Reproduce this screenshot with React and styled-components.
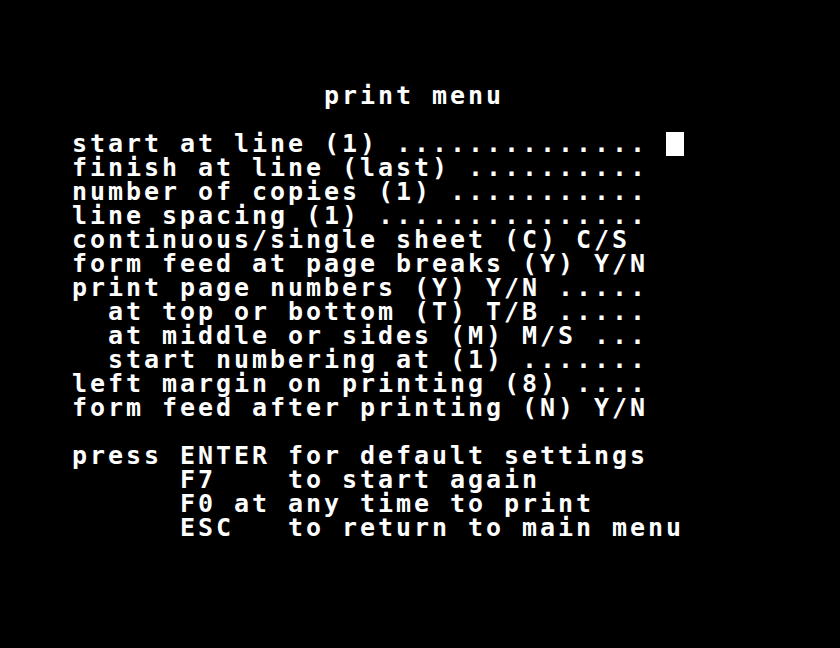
import React from "react";
import styled, { createGlobalStyle } from "styled-components";

const Global = createGlobalStyle`
  html, body {
    margin: 0;
    padding: 0;
    background: #000;
  }
  #root {
    min-height: 648px;
    background: #000;
  }
`;

const Screen = styled.div`
  width: 840px;
  height: 648px;
  box-sizing: border-box;
  padding: 84px 0 0 72px;
  background: #000;
  color: #fff;
  font-family: "DejaVu Sans Mono", "Liberation Mono", monospace;
  font-size: 25px;
  font-weight: ${(p) => (p.$bold ? 700 : 400)};
  letter-spacing: 2.95px;
  overflow: hidden;
`;

const Row = styled.div`
  height: 24px;
  line-height: 24px;
  white-space: pre;
  margin-bottom: ${(p) => (p.$gapAfter ? `${p.$gapAfter * 24}px` : "0")};
`;

const Cursor = styled.span`
  display: inline-block;
  width: 18px;
  height: 24px;
  background: #fff;
  vertical-align: top;
`;

const title = "              print menu";

const options = [
  "finish at line (last) ..........",
  "number of copies (1) ...........",
  "line spacing (1) ...............",
  "continuous/single sheet (C) C/S",
  "form feed at page breaks (Y) Y/N",
  "print page numbers (Y) Y/N .....",
  "  at top or bottom (T) T/B .....",
  "  at middle or sides (M) M/S ...",
  "  start numbering at (1) .......",
  "left margin on printing (8) ....",
  "form feed after printing (N) Y/N",
];

const help = [
  "press ENTER for default settings",
  "      F7    to start again",
  "      F0 at any time to print",
  "      ESC   to return to main menu",
];

export default function App() {
  return (
    <>
      <Global />
      <Screen $bold>
        <Row $gapAfter={1}>{title}</Row>
        <Row>
          {"start at line (1) .............. "}
          <Cursor />
        </Row>
        {options.map((l, i) => (
          <Row key={i} $gapAfter={i === options.length - 1 ? 1 : 0}>
            {l}
          </Row>
        ))}
        {help.map((l, i) => (
          <Row key={`h${i}`}>{l}</Row>
        ))}
      </Screen>
    </>
  );
}
